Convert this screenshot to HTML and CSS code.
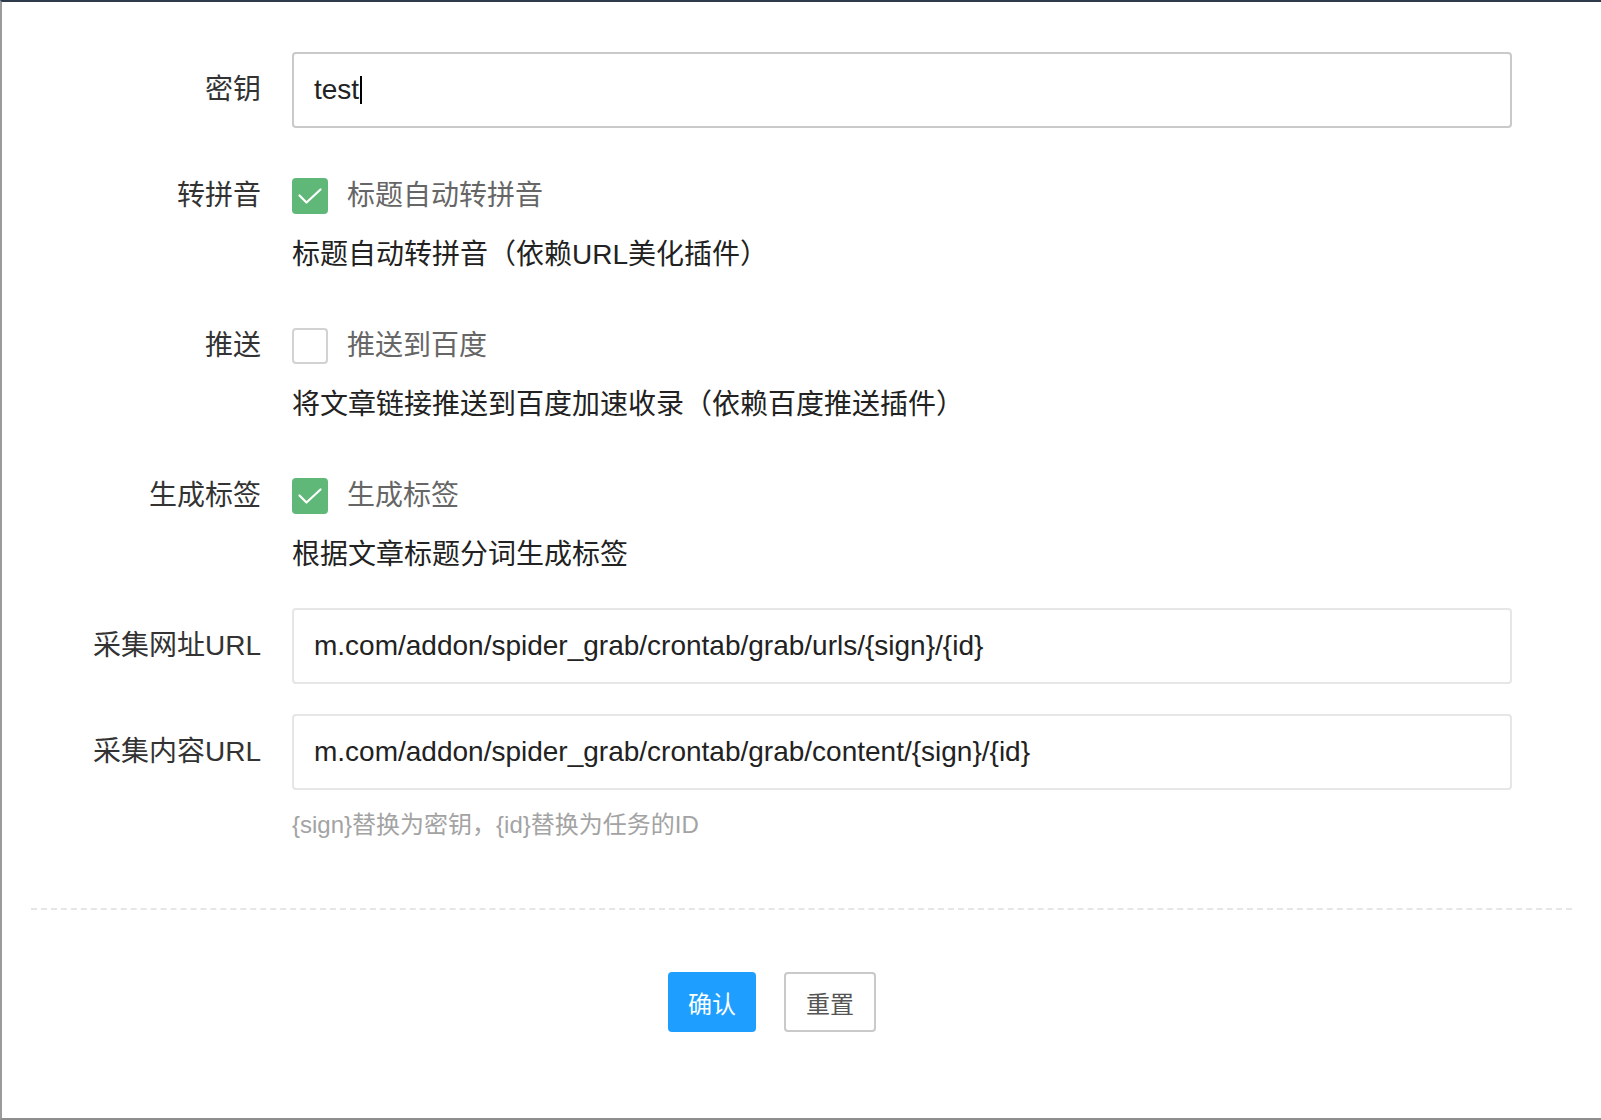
FILE: index.html
```html
<!DOCTYPE html>
<html lang="zh-CN">
<head>
<meta charset="utf-8">
<title>采集设置</title>
<link rel="stylesheet" href="styles.css">
</head>
<body>
<div class="frame">
  <form class="form">
    <div class="item">
      <label class="label">密钥</label>
      <div class="block">
        <div class="input focus">test<span class="caret"></span></div>
      </div>
    </div>

    <div class="item check-item">
      <label class="label">转拼音</label>
      <div class="block">
        <div class="check-line">
          <span class="box on"><svg viewBox="0 0 36 36" width="36" height="36"><path d="M7.5 17.5 L14.5 24.5 L28.5 11.5" fill="none" stroke="#fff" stroke-width="2.2" stroke-linecap="round" stroke-linejoin="round"/></svg></span>
          <span class="check-text">标题自动转拼音</span>
        </div>
        <div class="help">标题自动转拼音（依赖URL美化插件）</div>
      </div>
    </div>

    <div class="item check-item">
      <label class="label">推送</label>
      <div class="block">
        <div class="check-line">
          <span class="box"></span>
          <span class="check-text">推送到百度</span>
        </div>
        <div class="help">将文章链接推送到百度加速收录（依赖百度推送插件）</div>
      </div>
    </div>

    <div class="item check-item">
      <label class="label">生成标签</label>
      <div class="block">
        <div class="check-line">
          <span class="box on"><svg viewBox="0 0 36 36" width="36" height="36"><path d="M7.5 17.5 L14.5 24.5 L28.5 11.5" fill="none" stroke="#fff" stroke-width="2.2" stroke-linecap="round" stroke-linejoin="round"/></svg></span>
          <span class="check-text">生成标签</span>
        </div>
        <div class="help">根据文章标题分词生成标签</div>
      </div>
    </div>

    <div class="item">
      <label class="label">采集网址URL</label>
      <div class="block">
        <div class="input">m.com/addon/spider_grab/crontab/grab/urls/{sign}/{id}</div>
      </div>
    </div>

    <div class="item last">
      <label class="label">采集内容URL</label>
      <div class="block">
        <div class="input">m.com/addon/spider_grab/crontab/grab/content/{sign}/{id}</div>
        <div class="aux">{sign}替换为密钥，{id}替换为任务的ID</div>
      </div>
    </div>

    <div class="divider"></div>

    <div class="actions">
      <button type="button" class="btn btn-blue">确认</button>
      <button type="button" class="btn btn-plain">重置</button>
    </div>
  </form>
</div>
</body>
</html>
```
FILE: styles.css
```css
* { box-sizing: border-box; }
html, body { margin: 0; padding: 0; background: #fff; }
body {
  font-family: "Liberation Sans", "Noto Sans CJK SC", sans-serif;
  color: #333;
}
.frame {
  width: 1601px;
  height: 1120px;
  border-top: 2px solid #2e3b4c;
  border-left: 2px solid #9a9a9a;
  border-bottom: 2px solid #8e8e8e;
  overflow: hidden;
}
.form {
  padding-top: 50px;
}
.item {
  display: grid;
  grid-template-columns: 290px 1220px;
  margin-bottom: 30px;
}
.item.check-item { margin-bottom: 34px; }
.item.last { margin-bottom: 0; }
.label {
  text-align: right;
  padding-right: 31px;
  font-size: 28px;
  line-height: 76px;
  color: #333;
  white-space: nowrap;
}
.input {
  height: 76px;
  border: 2px solid #e6e6e6;
  border-radius: 4px;
  padding-left: 20px;
  font-size: 28px;
  line-height: 72px;
  color: #222;
  white-space: nowrap;
  overflow: hidden;
  display: flex;
  align-items: center;
}
.input.focus { border-color: #c9c9c9; }
.caret {
  display: inline-block;
  width: 2px;
  height: 28px;
  background: #000;
  margin-left: 1px;
}
.check-line {
  height: 76px;
  display: flex;
  align-items: center;
}
.box {
  width: 36px;
  height: 36px;
  border: 2px solid #d2d2d2;
  border-radius: 4px;
  background: #fff;
  display: flex;
  align-items: center;
  justify-content: center;
  flex: none;
}
.box.on {
  border: none;
  background: #5fb878;
}
.box svg { display: block; }
.check-text {
  margin-left: 19px;
  font-size: 28px;
  line-height: 76px;
  height: 76px;
  color: #666;
}
.help {
  font-size: 28px;
  line-height: 42px;
  margin-bottom: -2px;
  color: #222;
}
.aux {
  padding-top: 15px;
  font-size: 24px;
  line-height: 40px;
  color: #a3a3a3;
}
.divider {
  margin: 63px 29px 0 29px;
  border-top: 2px dashed #e6e6e6;
}
.actions {
  margin-top: 62px;
  display: flex;
  justify-content: center;
  gap: 28px;
  padding-right: 59px;
}
.btn {
  height: 60px;
  padding: 0 20px;
  font-family: "Liberation Sans", "Noto Sans CJK SC", sans-serif;
  font-size: 24px;
  border-radius: 4px;
  cursor: pointer;
}
.btn-blue {
  width: 88px;
  background: #1e9fff;
  color: #fff;
  border: none;
}
.btn-plain {
  width: 92px;
  background: #fff;
  color: #555;
  border: 2px solid #c9c9c9;
}
```
